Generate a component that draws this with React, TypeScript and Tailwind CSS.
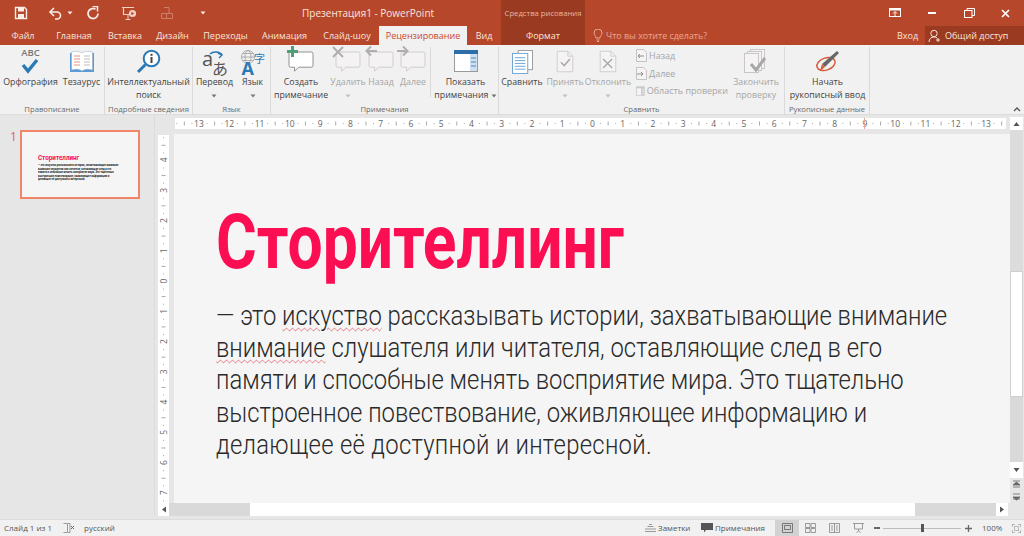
import { ReactNode } from "react";

const bubble = "M3 2h26a2 2 0 012 2v15a2 2 0 01-2 2H13l-5 5v-5H3a2 2 0 01-2-2V4a2 2 0 012-2z";

function Caret({ color = "#777" }: { color?: string }) {
  return (
    <svg width="6" height="4" viewBox="0 0 6 4" className="inline-block">
      <path d="M0.5 0.5h5L3 3.5z" fill={color} />
    </svg>
  );
}

function Comment({ children, muted }: { children?: ReactNode; muted?: boolean }) {
  return (
    <svg width="36" height="30" viewBox="-2 -6 36 30" className="overflow-visible">
      <path d={bubble} transform="translate(0 -5) scale(0.8 0.8) translate(4 3)" fill={muted ? "#f5f2f3" : "#fff"} stroke={muted ? "#cfcbcc" : "#8c8c8c"} strokeWidth="1.2" />
      {children}
    </svg>
  );
}

function Page({ children }: { children?: ReactNode }) {
  return (
    <svg width="18" height="23" viewBox="0 0 22 28">
      <path d="M1.5 1.5h13l6 6v19h-19z" fill="#f6f3f5" stroke="#c9c6c8" />
      <path d="M14.5 1.5v6h6" fill="none" stroke="#c9c6c8" />
      {children}
    </svg>
  );
}

function RButton({ w, icon, lines, muted, caret }: { w: string; icon: ReactNode; lines: ReactNode[]; muted?: boolean; caret?: boolean }) {
  return (
    <div className={`${w} flex flex-col items-center shrink-0`}>
      <div className="h-[29px] flex items-center justify-center">{icon}</div>
      <div className={`text-[8.8px] leading-[13px] text-center whitespace-nowrap ${muted ? "text-[#a6a6a6]" : "text-[#444]"}`}>
        {lines.map((l, i) => (
          <div key={i}>{l}</div>
        ))}
        {caret && (
          <div className="h-[13px] flex items-center justify-center">
            <Caret color={muted ? "#c0c0c0" : "#777"} />
          </div>
        )}
      </div>
    </div>
  );
}

function Group({ w, label, children }: { w: string; label: string; children: ReactNode }) {
  return (
    <div className={`${w} h-[67px] shrink-0 flex flex-col border-r border-[#dadada]`}>
      <div className="h-[57px] flex">{children}</div>
      <div className="h-[10px] leading-[10px] text-[7.7px] text-center text-[#6a6a6a] whitespace-nowrap">{label}</div>
    </div>
  );
}

function Tab({ w, label, active }: { w: string; label: string; active?: boolean }) {
  return (
    <div className={`${w} h-full shrink-0 text-center text-[9px] leading-[19px] ${active ? "bg-[#f1f1f1] text-[#c8472b]" : "text-[#f8e4dd]"}`}>
      {label}
    </div>
  );
}

function HRuler() {
  const zero = 417.5;
  const unit = 30.27;
  const items = [];
  for (let i = -13; i <= 13; i++) {
    const x = zero + i * unit;
    items.push(
      <text key={i} x={x} y="8.5" textAnchor="middle" fontSize="8.5" fill="#666">
        {Math.abs(i)}
      </text>
    );
  }
  const ticks = [];
  for (let i = -14; i <= 13; i++) {
    const x = zero + i * unit;
    ticks.push(<rect key={`a${i}`} x={x + unit * 0.25} y="5" width="1" height="1" fill="#aaa" />);
    ticks.push(<rect key={`b${i}`} x={x + unit * 0.5} y="3.5" width="1" height="4" fill="#aaa" />);
    ticks.push(<rect key={`c${i}`} x={x + unit * 0.75} y="5" width="1" height="1" fill="#aaa" />);
  }
  return (
    <svg width="831" height="11" viewBox="0 0 831 11" className="bg-white">
      {ticks}
      {items}
      <rect x="689" y="0" width="1" height="11" fill="#e8a99a" />
    </svg>
  );
}

function VRuler() {
  const zero = 146;
  const unit = 30.27;
  const items = [];
  for (let i = -4; i <= 7; i++) {
    const y = zero + i * unit;
    items.push(
      <text key={i} x="0" y="0" transform={`translate(8.5 ${y}) rotate(-90)`} textAnchor="middle" fontSize="8.5" fill="#666">
        {Math.abs(i)}
      </text>
    );
  }
  const ticks = [];
  for (let i = -5; i <= 7; i++) {
    const y = zero + i * unit;
    ticks.push(<rect key={`a${i}`} x="5" y={y + unit * 0.25} width="1" height="1" fill="#aaa" />);
    ticks.push(<rect key={`b${i}`} x="3.5" y={y + unit * 0.5} width="4" height="1" fill="#aaa" />);
    ticks.push(<rect key={`c${i}`} x="5" y={y + unit * 0.75} width="1" height="1" fill="#aaa" />);
  }
  return (
    <svg width="11" height="368" viewBox="0 0 11 368" className="bg-white">
      {ticks}
      {items}
    </svg>
  );
}

export default function App() {
  const spell = "underline decoration-wavy decoration-[#e2707a] decoration-1 underline-offset-[2px]";
  return (
    <div className="w-[1024px] h-[536px] overflow-hidden flex flex-col bg-[#e6e6e6] font-['Open_Sans','Noto_Sans',sans-serif]">
      {/* title bar */}
      <div className="h-[26px] shrink-0 bg-[#b7472a] flex items-center text-[#f8e4dd] relative">
        <div className="w-[501px] flex items-center h-full shrink-0">
          <svg width="14" height="14" viewBox="0 0 14 14" className="ml-[14px]">
            <path d="M1.5 1.5h9l2 2v9h-11z" fill="none" stroke="#fbeee9" strokeWidth="1.4" />
            <rect x="4" y="2" width="6" height="3.5" fill="#fbeee9" />
            <rect x="4" y="8" width="6" height="4.5" fill="#fbeee9" />
          </svg>
          <svg width="14" height="14" viewBox="0 0 14 14" className="ml-[20px]">
            <path d="M3 6h6a3.5 3.5 0 010 7H7" fill="none" stroke="#fbeee9" strokeWidth="1.6" />
            <path d="M6 2L2 6l4 4" fill="none" stroke="#fbeee9" strokeWidth="1.6" />
          </svg>
          <span className="ml-[5px] flex"><Caret color="#fbeee9" /></span>
          <svg width="14" height="14" viewBox="0 0 14 14" className="ml-[13px]">
            <path d="M9.5 3.2A5 5 0 1 0 12 7.5" fill="none" stroke="#fbeee9" strokeWidth="1.7" />
            <path d="M6.5 0.5h5v5" fill="none" stroke="#fbeee9" strokeWidth="1.5" />
          </svg>
          <svg width="16" height="15" viewBox="0 0 16 15" className="ml-[21px]">
            <path d="M1 1.5h12M2.5 2v6.5h9" fill="none" stroke="#f3cfc4" strokeWidth="1.2" />
            <path d="M7 9v4M4.5 13.5h5" fill="none" stroke="#f3cfc4" />
            <circle cx="11.5" cy="7.5" r="3.6" fill="#f3cfc4" />
            <path d="M10.4 5.8l2.8 1.7-2.8 1.7z" fill="#b7472a" />
          </svg>
          <svg width="14" height="14" viewBox="0 0 14 14" className="ml-[23px]">
            <path d="M4 1.5h5v6H1.5v5h5v-5M6.5 7.5h6v5h-6" fill="none" stroke="#cf7f69" />
          </svg>
          <span className="ml-[26px] flex"><Caret color="#fbeee9" /></span>
          <span className="ml-[96px] text-[10px] whitespace-nowrap">Презентация1 - PowerPoint</span>
        </div>
        <div className="w-[84px] h-full shrink-0 bg-[#9a3a21] text-[7.7px] leading-[26px] text-center text-[#e7b5a5] whitespace-nowrap">Средства рисования</div>
        <svg width="12" height="10" viewBox="0 0 12 10" className="ml-[304px]">
          <rect x="0.5" y="0.5" width="11" height="8" fill="none" stroke="#fff" />
          <rect x="0.5" y="0.5" width="11" height="2" fill="#fff" />
          <path d="M6 8V4M4 5.5L6 3.5l2 2" fill="none" stroke="#fff" />
        </svg>
        <div className="ml-[27px] w-[8px] h-[2px] bg-white" />
        <svg width="11" height="10" viewBox="0 0 11 10" className="ml-[28px]">
          <rect x="0.5" y="2.5" width="7.5" height="7" fill="none" stroke="#fff" />
          <path d="M3 2.5v-2h7.5v7H8" fill="none" stroke="#fff" />
        </svg>
        <svg width="9" height="9" viewBox="0 0 9 9" className="ml-[26px]">
          <path d="M1 1l7 7M8 1L1 8" stroke="#fff" strokeWidth="1.7" />
        </svg>
      </div>

      {/* tabs */}
      <div className="h-[19px] shrink-0 bg-[#b7472a] flex items-center">
        <Tab w="w-[46px]" label="Файл" />
        <Tab w="w-[56px]" label="Главная" />
        <Tab w="w-[46px]" label="Вставка" />
        <Tab w="w-[49px]" label="Дизайн" />
        <Tab w="w-[57px]" label="Переходы" />
        <Tab w="w-[61px]" label="Анимация" />
        <Tab w="w-[64px]" label="Слайд-шоу" />
        <Tab w="w-[88px]" label="Рецензирование" active />
        <Tab w="w-[34px]" label="Вид" />
        <div className="w-[84px] h-full shrink-0 bg-[#9a3a21] text-center text-[9px] leading-[19px] text-[#f8e4dd]">Формат</div>
        <svg width="10" height="13" viewBox="0 0 10 13" className="ml-[8px]">
          <path d="M3 9c0-2-2-3-2-5a4 4 0 018 0c0 2-2 3-2 5zM3.5 11h3M4 12.5h2" fill="none" stroke="#e9a893" />
        </svg>
        <span className="ml-[3px] w-[101px] text-[8.9px] text-[#e9a893] whitespace-nowrap">Что вы хотите сделать?</span>
        <span className="ml-[190px] w-[21px] text-[9px] text-[#f8e4dd]">Вход</span>
        <div className="ml-[7px] h-full flex-1 bg-[#9a3a21] flex items-center text-[9px] text-[#f8e4dd] whitespace-nowrap">
          <svg width="14" height="14" viewBox="0 0 14 14" className="ml-[3px]">
            <circle cx="6" cy="4.5" r="3.2" fill="none" stroke="#f8e4dd" />
            <path d="M1 13c0-3 2-5 5-5 1 0 2 .3 3 1M10 9v4M8 11h4" fill="none" stroke="#f8e4dd" />
          </svg>
          <span className="ml-[3px]">Общий доступ</span>
        </div>
      </div>

      {/* ribbon */}
      <div className="h-[70px] shrink-0 bg-[#f1f1f1] flex pt-[2px] border-b border-[#dcdcdc] relative">
        <Group w="w-[105px]" label="Правописание">
          <RButton
            w="w-[61px]"
            lines={["Орфография"]}
            icon={
              <div className="flex flex-col items-center -mt-[1px]">
                <span className="text-[9.5px] leading-[10px] font-semibold text-[#777]">ABC</span>
                <svg width="18" height="16" viewBox="0 0 18 16">
                  <path d="M2 7l5 6L16 2" fill="none" stroke="#2b79b5" strokeWidth="3.4" />
                </svg>
              </div>
            }
          />
          <RButton
            w="w-[41px]"
            lines={["Тезаурус"]}
            icon={
              <svg width="26" height="23" viewBox="0 0 26 23">
                <rect x="1" y="3" width="24" height="19" fill="#5b9bd5" />
                <path d="M2.5 2c4-1 8-1 10.500 1 2.500-2 6.500-2 10.500-1v18c-4-1-8-1-10.500 1-2.500-2-6.500-2-10.500-1z" fill="#fff" stroke="#8fa9c0" strokeWidth=".5" />
                <path d="M5 6h6M5 9h6M5 12h6M5 15h6" stroke="#e08b73" strokeWidth=".9" />
                <path d="M15 6h6M15 9h6M15 12h6M15 15h6" stroke="#b5b5b5" strokeWidth=".9" />
              </svg>
            }
          />
        </Group>
        <Group w="w-[88px]" label="Подробные сведения">
          <RButton
            w="w-[87px]"
            lines={["Интеллектуальный", "поиск"]}
            icon={
              <svg width="25" height="25" viewBox="0 0 25 25">
                <circle cx="15.500" cy="9.500" r="7.800" fill="#fff" stroke="#2b79b5" strokeWidth="2" />
                <path d="M9.500 15.500L2 23" stroke="#2b79b5" strokeWidth="3" />
                <rect x="14.500" y="8" width="2" height="6" fill="#444" />
                <rect x="14.500" y="4.800" width="2" height="2" fill="#444" />
              </svg>
            }
          />
        </Group>
        <Group w="w-[78px]" label="Язык">
          <RButton
            w="w-[43px]"
            caret
            lines={["Перевод"]}
            icon={
              <svg width="28" height="28" viewBox="0 0 28 28" className="overflow-visible">
                <path d="M9 6a7 5 0 0112 1" fill="none" stroke="#2b79b5" strokeWidth="1.500" />
                <path d="M18 10l3-3-4-2" fill="none" stroke="#2b79b5" strokeWidth="1.400" />
                <text x="1" y="18" fontSize="20" fill="#555" fontFamily="Open Sans">a</text>
                <text x="11" y="27" fontSize="16" fill="#555" fontFamily="Noto Sans CJK JP">あ</text>
              </svg>
            }
          />
          <RButton
            w="w-[33px]"
            caret
            lines={["Язык"]}
            icon={
              <svg width="26" height="26" viewBox="0 0 26 26" className="overflow-visible">
                <g fill="none" stroke="#a0a0a0" strokeWidth=".8">
                  <circle cx="8" cy="8" r="6.500" />
                  <ellipse cx="8" cy="8" rx="3" ry="6.500" />
                  <path d="M1.500 8h13M2.500 4.500h11M2.500 11.500h11" />
                </g>
                <text x="1.500" y="26" fontSize="18" fontWeight="700" fill="#2b79b5" fontFamily="Open Sans">A</text>
                <text x="14" y="14" fontSize="11" fill="#2b79b5" fontFamily="Noto Sans CJK JP">字</text>
              </svg>
            }
          />
        </Group>
        <Group w="w-[228px]" label="Примечания">
          <RButton
            w="w-[60px]"
            lines={["Создать", "примечание"]}
            icon={
              <Comment>
                <rect x="6" y="-7" width="3" height="11" fill="#4f9e76" />
                <rect x="2" y="-3" width="11" height="3" fill="#4f9e76" />
              </Comment>
            }
          />
          <RButton
            w="w-[34px]"
            muted
            caret
            lines={["Удалить"]}
            icon={
              <Comment muted>
                <path d="M1-6l10 10M11-6L1 4" stroke="#b0aeaf" strokeWidth="2" />
              </Comment>
            }
          />
          <RButton
            w="w-[32px]"
            muted
            lines={["Назад"]}
            icon={
              <Comment muted>
                <path d="M12-2H2M6-6.500L1.500-2 6 2.500" fill="none" stroke="#b0aeaf" strokeWidth="2" />
              </Comment>
            }
          />
          <RButton
            w="w-[32px]"
            muted
            lines={["Далее"]}
            icon={
              <Comment muted>
                <path d="M0-2h10M6-6.500L10.500-2 6 2.500" fill="none" stroke="#b0aeaf" strokeWidth="2" />
              </Comment>
            }
          />
          <div className="w-px h-[50px] bg-[#dadada] mx-[1px] shrink-0" />
          <RButton
            w="w-[67px]"
            lines={[
              "Показать",
              <span key="p">
                примечания <Caret />
              </span>,
            ]}
            icon={
              <svg width="24" height="23" viewBox="0 0 24 23">
                <rect x=".5" y=".5" width="23" height="21" fill="#fff" stroke="#9a9a9a" />
                <rect x="0" y="0" width="24" height="4" fill="#2b6ea8" />
                <rect x="16" y="4" width="7" height="17" fill="#cfe0f0" />
                <path d="M17 8h5M17 12h5M17 16h5" stroke="#4c87bd" strokeWidth="1.200" />
              </svg>
            }
          />
        </Group>
        <Group w="w-[286px]" label="Сравнить">
          <RButton
            w="w-[46px]"
            lines={["Сравнить"]}
            icon={
              <svg width="21" height="24" viewBox="0 0 22 25">
                <rect x="6.500" y=".5" width="15" height="20" fill="#fff" stroke="#9a9a9a" />
                <rect x=".5" y="3.500" width="16" height="21" fill="#fff" stroke="#6ba3d6" />
                <path d="M3 8h11M3 11h11M3 14h11M3 17h11M3 20h11" stroke="#6ba3d6" />
              </svg>
            }
          />
          <RButton
            w="w-[40px]"
            muted
            caret
            lines={["Принять"]}
            icon={
              <Page>
                <path d="M6 15l4 4 7-8" fill="none" stroke="#a8a8a8" strokeWidth="1.800" />
              </Page>
            }
          />
          <RButton
            w="w-[46px]"
            muted
            caret
            lines={["Отклонить"]}
            icon={
              <Page>
                <path d="M5 11l11 11M16 11L5 22" fill="none" stroke="#a8a8a8" strokeWidth="1.600" />
              </Page>
            }
          />
          <div className="w-[97px] shrink-0 pl-[5px] flex flex-col text-[9px] text-[#a6a6a6] whitespace-nowrap">
            <div className="flex items-center gap-[2px] h-[17.500px]">
              <svg width="11" height="13" viewBox="0 0 11 13">
                <path d="M.5.5h7l3 3v9h-10z" fill="#f6f3f5" stroke="#c4c2c3" />
                <path d="M8 7H2M4 5L2 7l2 2" fill="none" stroke="#8e8e8e" />
              </svg>
              <span>Назад</span>
            </div>
            <div className="flex items-center gap-[2px] h-[17.500px]">
              <svg width="11" height="13" viewBox="0 0 11 13">
                <path d="M.5.5h7l3 3v9h-10z" fill="#f6f3f5" stroke="#c4c2c3" />
                <path d="M1 7h6M5 5l2 2-2 2" fill="none" stroke="#8e8e8e" />
              </svg>
              <span>Далее</span>
            </div>
            <div className="flex items-center gap-[2px] h-[17.500px]">
              <svg width="11" height="12" viewBox="0 0 11 12">
                <rect width="11" height="12" fill="#c9c9c9" />
                <rect x="1" y="2.500" width="5.500" height="8.500" fill="#f6f3f5" />
                <path d="M8 4h2M8 6.500h2M8 9h2" stroke="#f6f3f5" />
              </svg>
              <span>Область проверки</span>
            </div>
          </div>
          <RButton
            w="w-[56px]"
            muted
            lines={["Закончить", "проверку"]}
            icon={
              <svg width="24" height="26" viewBox="0 0 24 26">
                <rect x="6.500" y=".5" width="14" height="19" fill="#f6f3f5" stroke="#c9c6c8" />
                <rect x="3.500" y="2.500" width="14" height="19" fill="#f6f3f5" stroke="#c9c6c8" />
                <rect x=".5" y="4.500" width="14" height="19" fill="#f6f3f5" stroke="#c9c6c8" />
                <path d="M7 15l5 6L21 9" fill="none" stroke="#a8a8a8" strokeWidth="3" />
              </svg>
            }
          />
        </Group>
        <div className="w-[85px] h-[67px] shrink-0 flex flex-col border-r border-[#dadada]">
          <div className="h-[57px] flex">
            <RButton
              w="w-[85px]"
              lines={["Начать", "рукописный ввод"]}
              icon={
                <svg width="25" height="25" viewBox="0 0 25 25">
                  <ellipse cx="11" cy="15" rx="9.500" ry="6" transform="rotate(-20 11 15)" fill="none" stroke="#d9593a" strokeWidth="1.500" />
                  <path d="M22 2l2 2L10 18l-3-3z" fill="#666" />
                  <path d="M7 15l3 3-5 4z" fill="#d9593a" />
                </svg>
              }
            />
          </div>
          <div className="h-[10px] leading-[10px] text-[7.7px] text-center text-[#6a6a6a] whitespace-nowrap">Рукописные данные</div>
        </div>
        <svg width="8" height="6" viewBox="0 0 8 6" className="absolute right-[3px] bottom-[2px]">
          <path d="M1 5l3-3 3 3" fill="none" stroke="#555" strokeWidth="1.300" />
        </svg>
      </div>

      {/* main */}
      <div className="flex-1 min-h-0 flex">
        <div className="w-[155px] shrink-0 border-r border-[#dcdcdc] pt-[15px] flex items-start">
          <span className="w-[20px] pl-[10px] text-[12px] leading-[14px] text-[#e0664a]">1</span>
          <div className="w-[120px] h-[69px] shrink-0 border-2 border-[#f0856a] bg-[#f5f5f5] pl-[16px] pt-[22px] overflow-hidden">
            <div className="text-[7.5px] leading-[8px] font-bold text-[#fb0e52] origin-left scale-x-[0.84] whitespace-nowrap font-['Roboto',sans-serif]">Сторителлинг</div>
            <div className="mt-[2px] text-[3.2px] leading-[3.5px] text-[#222] font-bold whitespace-nowrap origin-left scale-x-[0.8] font-['Roboto',sans-serif]">
              <div>— это искуство рассказывать истории, захватывающие внимание</div>
              <div>внимание слушателя или читателя, оставляющие след в его</div>
              <div>памяти и способные менять восприятие мира. Это тщательно</div>
              <div>выстроенное повествование, оживляющее информацию и</div>
              <div>делающее её доступной и интересной.</div>
            </div>
          </div>
        </div>
        <div className="flex-1 min-w-0 flex flex-col ml-[1px]">
          <div className="h-[15px] shrink-0 pt-[3px] pl-[19px] flex">
            <HRuler />
            <div className="ml-[4px] w-[13px] h-[13px] -mt-[1px] bg-white flex items-center justify-center">
              <svg width="7" height="4" viewBox="0 0 7 4"><path d="M.5 4L3.500 0l3 4z" fill="#555" /></svg>
            </div>
          </div>
          <div className="h-[373px] shrink-0 flex">
            <div className="w-[18px] shrink-0 pt-[5px] pl-[2px]">
              <VRuler />
            </div>
            <div className="w-[836px] shrink-0 mt-[4px] bg-[#f5f5f5] pl-[42px] pt-[64px] overflow-hidden text-[#2a2a2a] font-['Roboto',sans-serif]">
              <div className="text-[76px] leading-[88px] font-bold text-[#fb0e52] origin-left scale-x-[0.82] whitespace-nowrap">Сторителлинг</div>
              <div className="mt-[14px] text-[28px] leading-[32.200px] font-light origin-left scale-x-[0.852] whitespace-nowrap">
                <div>— это <span className={spell}>искуство</span> рассказывать истории, захватывающие внимание</div>
                <div><span className={spell}>внимание</span> слушателя или читателя, оставляющие след в его</div>
                <div>памяти и способные менять восприятие мира. Это тщательно</div>
                <div>выстроенное повествование, оживляющее информацию и</div>
                <div className="tracking-[0.33px]">делающее её доступной и интересной.</div>
              </div>
            </div>
            <div className="w-[13px] shrink-0 flex flex-col bg-[#d9d9d9]">
              <div className="h-[141px] shrink-0 bg-[#dcdcdc]" />
              <div className="h-[126px] shrink-0 bg-white border border-[#cfcfcf]" />
              <div className="h-[65px] shrink-0" />
              <div className="h-[16px] shrink-0 bg-white flex items-center justify-center">
                <svg width="7" height="4" viewBox="0 0 7 4"><path d="M.5 0h6l-3 4z" fill="#555" /></svg>
              </div>
              <div className="flex-1 bg-[#e6e6e6] flex flex-col items-center gap-[5px] pt-[2px]">
                <svg width="9" height="8" viewBox="0 0 9 8"><path d="M1 1h7M4.500 2L1 5h7zM1 7h7" stroke="#666" fill="#666" strokeWidth=".8" /></svg>
                <svg width="9" height="8" viewBox="0 0 9 8"><path d="M1 1h7M4.500 7L1 4h7zM1 6h7" stroke="#666" fill="#666" strokeWidth=".8" /></svg>
              </div>
            </div>
          </div>
          <div className="h-[13px] shrink-0 flex ml-[2px]">
            <div className="w-[11px] h-full bg-white flex items-center justify-center shrink-0">
              <svg width="4" height="7" viewBox="0 0 4 7"><path d="M4 .5v6L0 3.500z" fill="#555" /></svg>
            </div>
            <div className="w-[81px] bg-[#d9d9d9] shrink-0" />
            <div className="w-[665px] bg-white shrink-0" />
            <div className="w-[81px] bg-[#d9d9d9] shrink-0" />
            <div className="w-[12px] h-full bg-white flex items-center justify-center shrink-0">
              <svg width="4" height="7" viewBox="0 0 4 7"><path d="M0 .5v6l4-3z" fill="#555" /></svg>
            </div>
          </div>
        </div>
      </div>

      {/* status bar */}
      <div className="h-[17px] shrink-0 mt-[3px] bg-[#f1f1f1] border-t border-[#dcdcdc] flex items-center text-[8px] text-[#555] whitespace-nowrap">
        <span className="ml-[4px] w-[47px]">Слайд 1 из 1</span>
        <svg width="12" height="10" viewBox="0 0 12 10" className="ml-[12px]">
          <path d="M.5 .5h4v9h-4M5 .5h2v9h-2" fill="none" stroke="#999" />
          <path d="M8 3l3 3M11 3L8 6" stroke="#666" />
        </svg>
        <span className="ml-[9px] w-[30px]">русский</span>
        <svg width="11" height="8" viewBox="0 0 11 8" className="ml-[531px]">
          <path d="M4 .5h3M2.500 2.500h6M0 5h11M0 7.500h11" stroke="#999" />
        </svg>
        <span className="ml-[2px] w-[32px]">Заметки</span>
        <svg width="12" height="10" viewBox="0 0 12 10" className="ml-[11px]">
          <path d="M0 0h12v7H5L3 9.500V7H0z" fill="#555" />
        </svg>
        <span className="ml-[2px] w-[48px]">Примечания</span>
        <div className="ml-[12px] w-[24px] h-full bg-[#d2d2d2] flex items-center justify-center">
          <svg width="11" height="10" viewBox="0 0 11 10">
            <path d="M.5 .5h10v9H.5zM2.500 2.500h6v4h-6z" fill="none" stroke="#777" />
          </svg>
        </div>
        <svg width="11" height="10" viewBox="0 0 11 10" className="ml-[6px]">
          <path d="M.5 .5h4.500v4h-4.500zM6 .5h4.500v4H6zM.5 5.500h4.500v4h-4.500zM6 5.500h4.500v4H6z" fill="none" stroke="#999" />
        </svg>
        <svg width="11" height="10" viewBox="0 0 11 10" className="ml-[13px]">
          <path d="M.5 .5h10v9H.5zM5.500 .5v9M2 3h2M2 5h2M2 7h2M7 3h2M7 5h2M7 7h2" fill="none" stroke="#999" />
        </svg>
        <svg width="11" height="10" viewBox="0 0 11 10" className="ml-[13px]">
          <path d="M0 .5h11M1.500 1v5h8V1M5.500 6v2M3.500 9.500l2-1.500 2 1.500" fill="none" stroke="#999" />
        </svg>
        <div className="ml-[10px] w-[6px] h-[1.500px] bg-[#666]" />
        <div className="ml-[3px] w-[78px] h-px bg-[#bbb] flex items-center justify-center">
          <div className="w-[3px] h-[8px] bg-[#555]" />
        </div>
        <svg width="7" height="7" viewBox="0 0 7 7" className="ml-[4px]">
          <path d="M0 3.500h7M3.500 0v7" stroke="#666" strokeWidth="1.300" />
        </svg>
        <span className="ml-[10px] w-[20px]">100%</span>
        <svg width="9" height="9" viewBox="0 0 9 9" className="ml-[10px]">
          <path d="M0 3V0h3M6 0h3v3M9 6v3H6M3 9H0V6" fill="none" stroke="#888" />
          <rect x="2.500" y="2.500" width="4" height="4" fill="none" stroke="#bbb" />
        </svg>
      </div>
    </div>
  );
}
